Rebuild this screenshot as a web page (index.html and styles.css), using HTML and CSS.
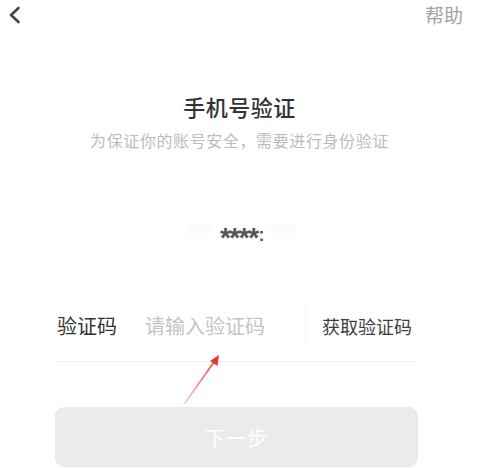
FILE: index.html
```html
<!DOCTYPE html>
<html lang="zh-CN">
<head>
<meta charset="utf-8">
<title>手机号验证</title>
<link rel="stylesheet" href="styles.css">
</head>
<body>
<div class="page">
  <header class="topbar">
    <svg class="back" width="14" height="20" viewBox="0 0 14 20"><path d="M11.5 3 L4 10 L11.5 17" fill="none" stroke="#444" stroke-width="2.6" stroke-linecap="round" stroke-linejoin="round"/></svg>
    <span class="help">帮助</span>
  </header>
  <h1 class="title">手机号验证</h1>
  <p class="subtitle">为保证你的账号安全，需要进行身份验证</p>
  <div class="phone">
    <span class="blur blur-l"></span>
    <span class="mask">****<span class="colon">:</span></span>
    <span class="blur blur-r"></span>
  </div>
  <div class="code-row">
    <span class="label">验证码</span>
    <input class="code-input" type="text" placeholder="请输入验证码">
    <span class="divider"></span>
    <span class="get-code">获取验证码</span>
  </div>
  <button class="next" type="button">下一步</button>
  <svg class="arrow" width="479" height="468" viewBox="0 0 479 468">
    <defs>
      <linearGradient id="ag" x1="185" y1="403" x2="219" y2="355" gradientUnits="userSpaceOnUse">
        <stop offset="0" stop-color="#e85a4f" stop-opacity="0.3"/>
        <stop offset="1" stop-color="#e4392d"/>
      </linearGradient>
    </defs>
    <line x1="185" y1="403" x2="214" y2="362" stroke="url(#ag)" stroke-width="1.8" stroke-linecap="round"/>
    <polygon points="219,355 217.5,366 210,361" fill="#e4392d"/>
  </svg>
</div>
</body>
</html>
```

FILE: styles.css
```css
* { box-sizing: border-box; }
html, body { margin: 0; padding: 0; background: #fff; }
body {
  font-family: "Noto Sans CJK SC", "Noto Sans", "Liberation Sans", sans-serif;
  color: #333;
}
.page {
  position: relative;
  width: 479px;
  height: 468px;
  overflow: hidden;
}
.topbar {
  height: 30px;
  padding: 0 16px 0 7px;
  display: flex;
  align-items: center;
  justify-content: space-between;
}
.back { display: block; }
.help {
  font-size: 19px;
  line-height: 24px;
  color: #a3a3a3;
}
.title {
  margin: 63px 0 0;
  text-align: center;
  font-size: 22px;
  line-height: 26px;
  font-weight: 500;
  color: #333;
  letter-spacing: 0.5px;
}
.subtitle {
  margin: 11px 0 0;
  text-align: center;
  font-size: 16px;
  line-height: 20px;
  color: #bdbdbd;
  letter-spacing: 0.6px;
}
.phone {
  margin-top: 72px;
  height: 20px;
  display: flex;
  justify-content: center;
  align-items: center;
  gap: 8px;
  padding-left: 4px;
}
.mask {
  font-family: "Liberation Sans", sans-serif;
  font-size: 28px;
  font-weight: bold;
  line-height: 20px;
  color: #555;
  letter-spacing: -1.5px;
  position: relative;
  top: 7px;
}
.colon {
  font-size: 18px;
  position: relative;
  top: -6px;
  margin-left: 1px;
}
.blur {
  width: 26px;
  height: 14px;
  background: linear-gradient(#fafafa, #fff);
}
.code-row {
  margin: 49px 61px 0 55px;
  height: 71px;
  padding: 0 6px 0 2px;
  display: flex;
  align-items: center;
  border-bottom: 1px solid #f1f1f1;
}
.label {
  font-size: 20px;
  line-height: 24px;
  color: #333;
  margin-right: 28px;
}
.code-input {
  flex: 1;
  min-width: 0;
  border: 0;
  outline: 0;
  padding: 0;
  font-family: inherit;
  font-size: 20px;
  line-height: 24px;
  color: #333;
  background: transparent;
}
.code-input::placeholder { color: #c4c4c4; }
.divider {
  width: 1px;
  height: 40px;
  background: #f0f0f0;
  margin-right: 16px;
}
.get-code {
  font-size: 18px;
  line-height: 24px;
  color: #404040;
}
.next {
  display: block;
  margin: 45px 61px 0 55px;
  width: 363px;
  height: 60px;
  border: 0;
  border-radius: 9px;
  background: #ebebeb;
  color: #fff;
  font-family: inherit;
  font-size: 20px;
  letter-spacing: 1px;
}
.arrow {
  position: absolute;
  left: 0;
  top: 0;
  pointer-events: none;
}
```
